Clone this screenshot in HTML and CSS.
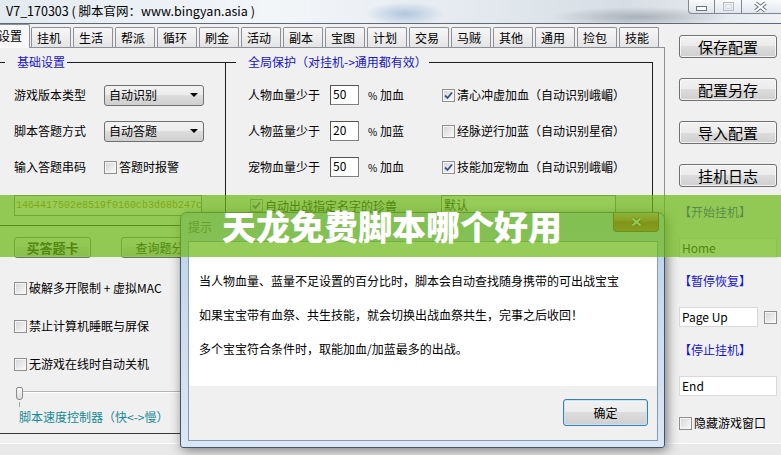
FILE: index.html
```html
<!DOCTYPE html>
<html lang="zh-CN">
<head>
    <meta charset="UTF-8">
    <meta name="viewport" content="width=device-width, initial-scale=1.0">
    <link rel="stylesheet" href="styles.css">
</head>
<body>
    <div class="window">
        <div class="titlebar">
            <span class="title">V7_170303 ( 脚本官网：www.bingyan.asia )</span>
            <div class="caption">
                <span class="cap cap-min">
                    <svg width="11" height="5" viewBox="0 0 11 5"><rect x="0.5" y="0.5" width="10" height="4" fill="#fff" stroke="#6a747f"/></svg>
                </span>
                <span class="cap cap-max">
                    <svg width="11" height="9" viewBox="0 0 11 9"><rect x="0.5" y="0.5" width="10" height="8" fill="none" stroke="#b3bcc5"/><rect x="2.5" y="2.5" width="6" height="4" fill="none" stroke="#d6dce2"/></svg>
                </span>
                <span class="cap cap-close">
                    <svg width="15" height="12" viewBox="0 0 15 12"><path d="M2.5 2 L12.5 10 M12.5 2 L2.5 10" stroke="#6a747f" stroke-width="4"/><path d="M2.5 2 L12.5 10 M12.5 2 L2.5 10" stroke="#fff" stroke-width="2"/></svg>
                </span>
            </div>
        </div>

        <div class="client">
            <div class="main">
                <div class="tabs">
                    <div class="tab active">设置</div>
                    <div class="tab">挂机</div>
                    <div class="tab">生活</div>
                    <div class="tab">帮派</div>
                    <div class="tab">循环</div>
                    <div class="tab">刷金</div>
                    <div class="tab">活动</div>
                    <div class="tab">副本</div>
                    <div class="tab">宝图</div>
                    <div class="tab">计划</div>
                    <div class="tab">交易</div>
                    <div class="tab">马贼</div>
                    <div class="tab">其他</div>
                    <div class="tab">通用</div>
                    <div class="tab">捡包</div>
                    <div class="tab">技能</div>
                </div>

                <div class="panel">
                    <div class="groups">
                        <fieldset class="group basic">
                            <legend>基础设置</legend>
                            <div class="row">
                                <span class="label">游戏版本类型</span>
                                <div class="combo">自动识别<i class="arrow"></i></div>
                            </div>
                            <div class="row">
                                <span class="label">脚本答题方式</span>
                                <div class="combo">自动答题<i class="arrow"></i></div>
                            </div>
                            <div class="row">
                                <span class="label">输入答题串码</span>
                                <label class="check"><span class="cb"></span>答题时报警</label>
                            </div>
                            <div class="serial">1464417502e8519f0160cb3d68b247c</div>
                        </fieldset>

                        <fieldset class="group guard">
                            <legend>全局保护（对挂机-&gt;通用都有效）</legend>
                            <div class="row">
                                <span class="glabel">人物血量少于</span>
                                <span class="num">50</span>
                                <span class="unit"><small>%</small> 加血</span>
                                <label class="check"><span class="cb"><svg width="11" height="11" viewBox="0 0 11 11"><path d="M2 5.5 L4.5 8 L9 2.5" fill="none" stroke="#3d5088" stroke-width="1.8"/></svg></span>清心冲虚加血（自动识别峨嵋）</label>
                            </div>
                            <div class="row">
                                <span class="glabel">人物蓝量少于</span>
                                <span class="num">20</span>
                                <span class="unit"><small>%</small> 加蓝</span>
                                <label class="check"><span class="cb"></span>经脉逆行加蓝（自动识别星宿）</label>
                            </div>
                            <div class="row">
                                <span class="glabel">宠物血量少于</span>
                                <span class="num">50</span>
                                <span class="unit"><small>%</small> 加血</span>
                                <label class="check"><span class="cb"><svg width="11" height="11" viewBox="0 0 11 11"><path d="M2 5.5 L4.5 8 L9 2.5" fill="none" stroke="#3d5088" stroke-width="1.8"/></svg></span>技能加宠物血（自动识别峨嵋）</label>
                            </div>
                            <div class="row last">
                                <label class="check pet"><span class="cb"><svg width="11" height="11" viewBox="0 0 11 11"><path d="M2 5.5 L4.5 8 L9 2.5" fill="none" stroke="#3d5088" stroke-width="1.8"/></svg></span>自动出战指定名字的珍兽</label>
                                <span class="field">默认</span>
                            </div>
                        </fieldset>
                    </div>

                    <div class="btn-row">
                        <button class="btn strong">买答题卡</button>
                        <button class="btn">查询题分</button>
                    </div>

                    <div class="checks">
                        <label class="check"><span class="cb"></span>破解多开限制 + 虚拟MAC</label>
                        <label class="check"><span class="cb"></span>禁止计算机睡眠与屏保</label>
                        <label class="check"><span class="cb"></span>无游戏在线时自动关机</label>
                    </div>

                    <div class="slider">
                        <span class="track"></span>
                        <span class="thumb"></span>
                        <span class="tick"></span>
                    </div>
                    <div class="speed">脚本速度控制器（快&lt;-&gt;慢）</div>
                </div>
            </div>

            <div class="side">
                <button class="btn sbtn">保存配置</button>
                <button class="btn sbtn">配置另存</button>
                <button class="btn sbtn">导入配置</button>
                <button class="btn sbtn">挂机日志</button>

                <div class="hot first">【开始挂机】</div>
                <div class="sfield">Home</div>
                <div class="hot">【暂停恢复】</div>
                <div class="page-row">
                    <div class="sfield short">Page Up</div>
                    <span class="cb"></span>
                </div>
                <div class="hot">【停止挂机】</div>
                <div class="sfield">End</div>
                <label class="check side-check"><span class="cb"></span>隐藏游戏窗口</label>
            </div>
        </div>
        <div class="frame-bottom"></div>
    </div>

    <div class="dialog">
        <div class="dlg-title">
            <span class="dlg-caption">提示</span>
            <span class="dlg-close">
                <svg width="13" height="10" viewBox="0 0 13 10"><path d="M2.5 1.5 L10.5 8.5 M10.5 1.5 L2.5 8.5" stroke="#5b1e15" stroke-width="3.6"/><path d="M2.5 1.5 L10.5 8.5 M10.5 1.5 L2.5 8.5" stroke="#fff" stroke-width="1.8"/></svg>
            </span>
        </div>
        <div class="dlg-body">
            <div class="dlg-msg">
                <p>当人物血量、蓝量不足设置的百分比时，脚本会自动查找随身携带的可出战宝宝</p>
                <p>如果宝宝带有血祭、共生技能，就会切换出战血祭共生，完事之后收回！</p>
                <p>多个宝宝符合条件时，取能加血/加蓝最多的出战。</p>
            </div>
            <div class="dlg-foot">
                <button class="btn ok">确定</button>
            </div>
        </div>
    </div>

    <div class="band"><span>天龙免费脚本哪个好用</span></div>
</body>
</html>
```

FILE: styles.css
```css
* {
    box-sizing: border-box;
}
body {
    margin: 0;
    width: 781px;
    height: 455px;
    overflow: hidden;
    position: relative;
    background: #f0f0f0;
    font-family: "Noto Sans CJK SC", "Noto Sans", sans-serif;
    font-size: 12px;
    line-height: 16px;
    color: #000;
}

/* window frame */
.titlebar {
    height: 24px;
    border-bottom: 1px solid #5d6b79;
    display: flex;
    background:
        radial-gradient(ellipse 40px 12px at 405px 14px, rgba(110,150,195,0.45), transparent),
        radial-gradient(ellipse 90px 10px at 640px 17px, rgba(60,70,85,0.3), transparent),
        linear-gradient(to right, #e3eaf0, #f3f6f9 35%, #e4eaf0 60%, #d6dde4 80%, #eef2f5);
}
.title {
    padding: 3px 0 0 6px;
    font-size: 12.5px;
}
.caption {
    margin-left: auto;
    margin-right: -5px;
    display: flex;
    height: 14px;
}
.cap {
    height: 14px;
    border: 1px solid #7d8893;
    border-top: none;
    background: linear-gradient(rgba(255,255,255,0.75), rgba(222,229,236,0.75));
    display: flex;
    justify-content: center;
    align-items: center;
}
.cap-min {
    width: 27px;
    border-bottom-left-radius: 4px;
    align-items: flex-end;
    padding-bottom: 2px;
}
.cap-max {
    width: 27px;
    border-left: none;
}
.cap-close {
    width: 44px;
    border-left: none;
    padding-right: 6px;
}
.client {
    display: flex;
    height: 419px;
}
.frame-bottom {
    height: 12px;
    border-top: 1px solid #fcfcfc;
    background: #e9e9e9;
}

/* tabs */
.main {
    width: 665px;
}
.tabs {
    display: flex;
    align-items: flex-end;
    gap: 2px;
    height: 23px;
    margin-left: -12px;
    position: relative;
    z-index: 1;
}
.tab {
    flex: none;
    width: 40px;
    height: 20px;
    border: 1px solid #8d9099;
    border-bottom: none;
    border-radius: 2px 2px 0 0;
    background: linear-gradient(#f7f7f7, #e4e4e4);
    padding-left: 5px;
    line-height: 19px;
}
.tab.active {
    width: 42px;
    height: 24px;
    margin-bottom: -1px;
    margin-right: -1px;
    background: #f8f8f8;
    padding-left: 9px;
    line-height: 22px;
}
.panel {
    height: 387px;
    border: 1px solid #8d9099;
    border-left: none;
    border-bottom-color: #3a3a3a;
    background: #f0f0f0;
}

/* group boxes */
.groups {
    display: flex;
    margin-top: 6px;
}
.group {
    margin: 0;
    min-width: 0;
    border: 1px solid #1c1c1c;
    padding: 7px 0 9px 0;
}
.group legend {
    padding: 0 2px 0 12px;
    color: #1616c8;
    line-height: 16px;
}
.basic {
    width: 226px;
    border-left: none;
    padding-left: 5px;
}
.guard {
    width: 428px;
    margin-left: -1px;
    padding-left: 10px;
}
.row {
    display: flex;
    align-items: center;
    height: 36px;
}
.basic .row,
.basic .serial {
    margin-left: 9px;
}
.guard .row {
    margin-left: 12px;
}
.label {
    width: 90px;
}
.combo {
    width: 100px;
    height: 21px;
    border: 1px solid #707070;
    border-radius: 3px;
    background: linear-gradient(#f2f2f2, #ebebeb 50%, #dddddd 50%, #cfcfcf);
    display: flex;
    align-items: center;
    padding-left: 4px;
}
.arrow {
    margin-left: auto;
    margin-right: 5px;
    border-left: 4px solid transparent;
    border-right: 4px solid transparent;
    border-top: 4px solid #000;
}
.serial {
    margin-top: 10px;
    width: 188px;
    height: 21px;
    border: 1px solid #7a7a7a;
    background: #fff;
    font-family: "Liberation Mono", monospace;
    font-size: 10px;
    line-height: 19px;
    color: #c27400;
    padding-left: 1px;
    white-space: nowrap;
    overflow: hidden;
}
.glabel {
    width: 82px;
}
.num {
    width: 29px;
    height: 20px;
    border: 1px solid #808080;
    border-top-color: #555;
    border-left-color: #555;
    background: #fff;
    padding-left: 2px;
    line-height: 15px;
}
.unit {
    width: 83px;
    padding-left: 9px;
}
.unit small {
    font-size: 10px;
}
.row.last {
    height: 21px;
    margin-top: 10px;
}
.pet {
    width: 193px;
    padding-left: 2px;
}
.field {
    width: 175px;
    height: 21px;
    border: 1px solid #7a7a7a;
    background: #fff;
    padding-left: 2px;
    line-height: 17px;
}

/* checkboxes */
.check {
    display: flex;
    align-items: center;
    gap: 2px;
    white-space: nowrap;
}
.cb {
    flex: none;
    width: 13px;
    height: 13px;
    border: 1px solid #8e8f8f;
    background: linear-gradient(135deg, #d4d4d4, #fbfbfb);
    box-shadow: inset 0 0 0 1px #f6f6f6;
    display: flex;
}

/* buttons */
.btn {
    height: 21px;
    border: 1px solid #707070;
    border-radius: 3px;
    background: linear-gradient(#f2f2f2, #ebebeb 50%, #dddddd 50%, #cfcfcf);
    box-shadow: inset 0 0 0 1px rgba(255,255,255,0.7);
    font: inherit;
    color: #000;
    padding: 0;
}
.btn-row {
    display: flex;
    gap: 30px;
    margin: 11px 0 0 14px;
}
.btn-row .btn {
    width: 77px;
}
.btn.strong {
    font-weight: bold;
    font-size: 13px;
}
.checks {
    margin: 11px 0 0 14px;
}
.checks .check {
    height: 38px;
}

/* slider */
.slider {
    position: relative;
    height: 26px;
    width: 630px;
    margin-left: 16px;
}
.track {
    position: absolute;
    left: 3px;
    right: 0;
    top: 8px;
    height: 2px;
    border-top: 1px solid #b4b4b4;
    border-bottom: 1px solid #fff;
}
.thumb {
    position: absolute;
    left: 0;
    top: 4px;
    width: 7px;
    height: 13px;
    border: 1px solid #8a8a8a;
    border-radius: 2px 2px 3px 3px;
    background: linear-gradient(#fbfbfb, #dcdcdc);
}
.tick {
    position: absolute;
    left: 3px;
    top: 19px;
    width: 1px;
    height: 5px;
    background: #a4a4a4;
}
.speed {
    margin-left: 19px;
    color: #168896;
}

/* right column */
.side {
    flex: 1;
    padding: 11px 0 0 14px;
    display: flex;
    flex-direction: column;
    align-items: flex-start;
}
.sbtn {
    width: 98px;
    height: 23px;
    font-size: 15px;
    flex: none;
}
.sbtn + .sbtn {
    margin-top: 20px;
}
.hot {
    color: #1616d0;
    margin-top: 15px;
}
.hot.first {
    margin-top: 17px;
}
.sfield {
    width: 98px;
    height: 20px;
    margin-top: 18px;
    border: 1px solid #d9d9d9;
    background: #fff;
    padding-left: 2px;
    line-height: 18px;
}
.page-row {
    display: flex;
    align-items: center;
    gap: 6px;
    margin-top: 18px;
}
.page-row .sfield {
    margin-top: 0;
}
.sfield.short {
    width: 79px;
}
.side-check {
    margin-top: 19px;
}

/* message box */
.dialog {
    position: absolute;
    left: 180px;
    top: 212px;
    width: 485px;
    height: 236px;
    border: 1px solid #44546a;
    border-radius: 7px 7px 3px 3px;
    background: linear-gradient(#b9d1ea, #c9dbee 40%, #dbe7f4);
    box-shadow: 2px 2px 12px rgba(0,0,0,0.5);
    padding: 0 6px 6px 7px;
    display: flex;
    flex-direction: column;
    z-index: 1;
}
.dlg-title {
    height: 28px;
    display: flex;
    justify-content: space-between;
}
.dlg-caption {
    color: #555;
    line-height: 28px;
}
.dlg-close {
    width: 46px;
    height: 19px;
    margin-right: -1px;
    border: 1px solid #6d2a1f;
    border-top: none;
    border-radius: 0 0 4px 4px;
    background: linear-gradient(#e8a595, #c8553e 45%, #b0361f 50%, #c45a3a);
    display: flex;
    justify-content: center;
    align-items: center;
}
.dlg-body {
    flex: 1;
    border: 1px solid #8399b4;
    background: #fff;
    display: flex;
    flex-direction: column;
}
.dlg-msg {
    padding: 29px 11px 0 10px;
}
.dlg-msg p {
    margin: 0 0 14px;
    line-height: 20px;
    white-space: nowrap;
}
.dlg-foot {
    margin-top: auto;
    height: 54px;
    background: #f0f0f0;
    display: flex;
    justify-content: flex-end;
    padding: 13px 9px 0 0;
}
.ok {
    width: 85px;
    height: 27px;
    border-color: #3c7fb1;
    box-shadow: inset 0 0 0 1px #c4e5f6;
}

/* promo band across the screenshot */
.band {
    position: absolute;
    left: 0;
    top: 195px;
    width: 781px;
    height: 62px;
    background: rgba(110,185,24,0.72);
    z-index: 2;
    padding: 13px 0 0 222px;
}
.band span {
    color: #fff;
    font-size: 34px;
    font-weight: 900;
    line-height: 36px;
    white-space: nowrap;
}
```
